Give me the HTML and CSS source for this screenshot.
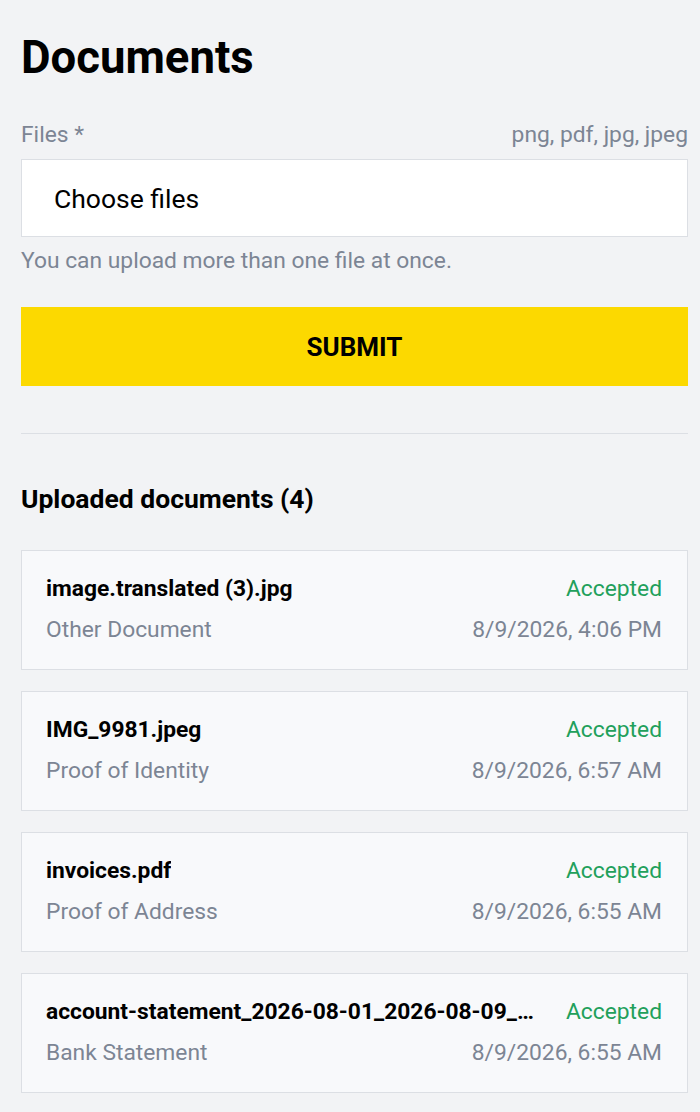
FILE: index.html
```html
<!DOCTYPE html>
<html lang="en">
<head>
<meta charset="utf-8">
<link rel="stylesheet" href="styles.css">
<title>Documents</title>
</head>
<body>
<main class="page">
  <h1 class="title">Documents</h1>
  <div class="field-head">
    <span class="label">Files *</span>
    <span class="types">png, pdf, jpg, jpeg</span>
  </div>
  <div class="file-input">Choose files</div>
  <p class="hint">You can upload more than one file at once.</p>
  <button class="submit">SUBMIT</button>
  <hr class="divider">
  <h2 class="subtitle">Uploaded documents (4)</h2>
  <ul class="docs">
    <li class="doc">
      <div class="row"><span class="name">image.translated (3).jpg</span><span class="status">Accepted</span></div>
      <div class="row"><span class="type">Other Document</span><span class="date">8/9/2026, 4:06 PM</span></div>
    </li>
    <li class="doc">
      <div class="row"><span class="name">IMG_9981.jpeg</span><span class="status">Accepted</span></div>
      <div class="row"><span class="type">Proof of Identity</span><span class="date">8/9/2026, 6:57 AM</span></div>
    </li>
    <li class="doc">
      <div class="row"><span class="name">invoices.pdf</span><span class="status">Accepted</span></div>
      <div class="row"><span class="type">Proof of Address</span><span class="date">8/9/2026, 6:55 AM</span></div>
    </li>
    <li class="doc">
      <div class="row"><span class="name">account-statement_2026-08-01_2026-08-09_en.pdf</span><span class="status">Accepted</span></div>
      <div class="row"><span class="type">Bank Statement</span><span class="date">8/9/2026, 6:55 AM</span></div>
    </li>
  </ul>
</main>
</body>
</html>
```

FILE: styles.css
```css
* { box-sizing: border-box; }
html, body { margin: 0; padding: 0; }
body {
  background: #f2f3f5;
  font-family: Roboto, "Liberation Sans", sans-serif;
  color: #000;
}
.page {
  width: 667px;
  margin-left: 21px;
  padding-top: 30px;
}
.title {
  margin: 0;
  font-size: 45.5px;
  font-weight: 700;
  line-height: 56px;
}
.field-head {
  display: flex;
  justify-content: space-between;
  margin-top: 34px;
  font-size: 22.8px;
  line-height: 30px;
  color: #7c8594;
}
.file-input {
  margin-top: 9px;
  height: 78px;
  background: #fff;
  border: 1px solid #dcdfe4;
  display: flex;
  align-items: center;
  padding-left: 32px;
  font-size: 26.5px;
  color: #000;
}
.hint {
  margin: 9px 0 0;
  font-size: 22.8px;
  line-height: 30px;
  color: #7c8594;
}
.submit {
  display: block;
  width: 100%;
  margin-top: 31px;
  height: 79px;
  border: 0;
  padding: 0;
  background: #fcd900;
  font-family: inherit;
  font-size: 26px;
  font-weight: 700;
  color: #000;
}
.divider {
  margin: 47px 0 0;
  border: 0;
  border-top: 1px solid #dcdfe4;
}
.subtitle {
  margin: 49px 0 0;
  font-size: 26.5px;
  line-height: 32px;
  font-weight: 700;
}
.docs {
  list-style: none;
  margin: 35px 0 0;
  padding: 0;
  display: flex;
  flex-direction: column;
  gap: 21px;
}
.doc {
  height: 120px;
  background: #f8f9fb;
  border: 1px solid #dcdfe4;
  padding: 23px 25px 0 24px;
  display: flex;
  flex-direction: column;
  gap: 11px;
}
.row {
  display: flex;
  justify-content: space-between;
  align-items: baseline;
  gap: 32px;
  font-size: 22.8px;
  line-height: 30px;
}
.name {
  font-weight: 700;
  white-space: nowrap;
  overflow: hidden;
  text-overflow: ellipsis;
  min-width: 0;
}
.status { color: #22a05b; white-space: nowrap; }
.type, .date { color: #7c8594; white-space: nowrap; }
```
